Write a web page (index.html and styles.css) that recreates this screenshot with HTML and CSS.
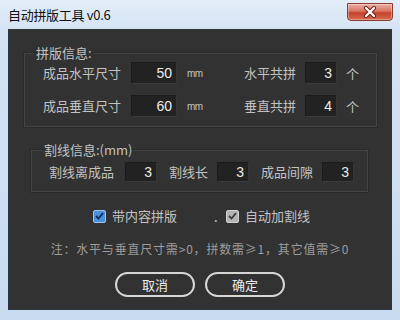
FILE: index.html
```html
<!DOCTYPE html>
<html lang="zh-CN">

<head>
    <meta charset="UTF-8">
    <title>自动拼版工具 v0.6</title>
    <link rel="stylesheet" href="styles.css">
</head>

<body>
    <div class="window">
        <div class="titlebar">
            <span class="title">自动拼版工具 v0.6</span>
            <button class="close" type="button" aria-label="关闭">
                <svg width="14" height="12" viewBox="0 0 14 12">
                    <path d="M3 2 L11 10 M11 2 L3 10" stroke="#6b1f14" stroke-width="4" stroke-linecap="round" fill="none" />
                    <path d="M3 2 L11 10 M11 2 L3 10" stroke="#ffffff" stroke-width="2.2" stroke-linecap="round" fill="none" />
                </svg>
            </button>
        </div>

        <div class="panel">
            <fieldset class="group group-size">
                <legend>拼版信息:</legend>
                <div class="row">
                    <label class="lbl lbl-size">成品水平尺寸</label>
                    <input class="field field-size" type="text" value="50">
                    <span class="unit unit-mm">mm</span>
                    <label class="lbl lbl-count">水平共拼</label>
                    <input class="field field-count" type="text" value="3">
                    <span class="unit unit-ge">个</span>
                </div>
                <div class="row">
                    <label class="lbl lbl-size">成品垂直尺寸</label>
                    <input class="field field-size" type="text" value="60">
                    <span class="unit unit-mm">mm</span>
                    <label class="lbl lbl-count">垂直共拼</label>
                    <input class="field field-count" type="text" value="4">
                    <span class="unit unit-ge">个</span>
                </div>
            </fieldset>

            <fieldset class="group group-cut">
                <legend>割线信息:(mm)</legend>
                <div class="row row-cut">
                    <label class="lbl lbl-gap">割线离成品</label>
                    <input class="field field-cut" type="text" value="3">
                    <label class="lbl lbl-len">割线长</label>
                    <input class="field field-cut" type="text" value="3">
                    <label class="lbl lbl-space">成品间隙</label>
                    <input class="field field-cut" type="text" value="3">
                </div>
            </fieldset>

            <div class="checks">
                <label class="check">
                    <span class="box box-on">
                        <svg width="9" height="8" viewBox="0 0 9 8">
                            <path d="M1 4 L3.5 6.5 L8 1.2" stroke="#10305c" stroke-width="1.8" fill="none" />
                        </svg>
                    </span>
                    带内容拼版
                </label>
                <span class="dot">.</span>
                <label class="check">
                    <span class="box box-gray">
                        <svg width="9" height="8" viewBox="0 0 9 8">
                            <path d="M1 4 L3.5 6.5 L8 1.2" stroke="#3a3a3a" stroke-width="1.8" fill="none" />
                        </svg>
                    </span>
                    自动加割线
                </label>
            </div>

            <p class="note">注：水平与垂直尺寸需&gt;0，拼数需≥1，其它值需≥0</p>

            <div class="actions">
                <button class="btn" type="button">取消</button>
                <button class="btn" type="button">确定</button>
            </div>
        </div>
    </div>
</body>

</html>
```

FILE: styles.css
```css
:root {
    --frame: #c9dcf0;
    --panel: #323232;
    --field: #222222;
    --text: #c2c2c2;
    --text-dim: #9c9c9c;
    --group-line: #444444;
}

body {
    margin: 0;
    font-family: "Noto Sans CJK SC", "Noto Sans", sans-serif;
}

.window {
    width: 400px;
    height: 320px;
    background: linear-gradient(180deg, #e4edf8 0%, #d3e3f4 10%, #c8dbef 100%);
    overflow: hidden;
}

.titlebar {
    height: 29px;
    display: flex;
    justify-content: space-between;
    align-items: flex-start;
    padding: 0 7px 0 8px;
    box-sizing: border-box;
}

.title {
    margin-top: 6px;
    font-size: 13px;
    line-height: 18px;
    letter-spacing: -0.3px;
    color: #111;
}

.close {
    margin-top: 3px;
    width: 46px;
    height: 18px;
    padding: 0;
    display: flex;
    align-items: center;
    justify-content: center;
    border: 1px solid #8a3a30;
    border-radius: 0 0 4px 4px;
    background: linear-gradient(180deg, #eab1a4 0%, #d9735f 45%, #c4412b 55%, #d66a50 100%);
    box-shadow: inset 0 0 0 1px rgba(255, 255, 255, 0.35);
}

.panel {
    margin: 0 8px;
    height: 281px;
    box-sizing: border-box;
    padding-top: 16px;
    background: var(--panel);
    border: 1px solid #2a3442;
    border-top: none;
    color: var(--text);
    font-size: 13px;
}

.group {
    margin: 0;
    border: 1px solid var(--group-line);
    box-shadow: 0 0 0 1px #2a2a2a;
}

.group legend {
    padding: 0 2px;
    font-size: 13px;
    line-height: 16px;
    color: var(--text);
}

.group-size {
    margin: 0 14px 0 15px;
    padding: 1px 0 9px 9px;
}

.group-size .row + .row {
    margin-top: 11px;
}

.group-cut {
    margin: 15px 23px 0 22px;
    padding: 4px 0 9px 10px;
}

.row {
    display: flex;
    align-items: center;
    padding-left: 9px;
}

.row-cut {
    padding-left: 7px;
}

.lbl {
    line-height: 16px;
    white-space: nowrap;
}

.lbl-size {
    width: 88px;
}

.lbl-count {
    width: 61px;
}

.lbl-gap {
    width: 76px;
}

.lbl-len {
    width: 48px;
    padding-left: 12px;
}

.lbl-space {
    width: 61px;
    padding-left: 12px;
}

.field {
    height: 22px;
    box-sizing: border-box;
    padding: 0 4px 0 0;
    background: var(--field);
    border: 1px solid #1b1b1b;
    border-bottom-color: #3b3b3b;
    border-right-color: #363636;
    color: #ececec;
    font-family: "Liberation Sans", sans-serif;
    font-size: 14px;
    text-align: right;
    outline: none;
}

.field-size {
    width: 46px;
}

.field-count,
.field-cut {
    width: 32px;
}

.field-cut {
    height: 20px;
}

.unit-mm {
    width: 57px;
    padding-left: 10px;
    font-family: "Liberation Sans", sans-serif;
    font-size: 10px;
    letter-spacing: -0.5px;
}

.unit-ge {
    padding-left: 9px;
}

.checks {
    margin-top: 16px;
    padding-left: 84px;
    display: flex;
    align-items: center;
    height: 16px;
}

.check {
    display: flex;
    align-items: center;
    gap: 6px;
    line-height: 16px;
}

.box {
    width: 13px;
    height: 13px;
    box-sizing: border-box;
    display: flex;
    align-items: center;
    justify-content: center;
    border-radius: 2px;
}

.box-on {
    background: #4c8fde;
    border: 1px solid #9cc2ee;
}

.box-gray {
    background: #b4b4b4;
    border: 1px solid #d0d0d0;
}

.dot {
    width: 49px;
    padding-left: 37px;
    box-sizing: border-box;
    color: #e0e0e0;
}

.note {
    margin: 17px 0 0;
    line-height: 16px;
    font-size: 12px;
    letter-spacing: 0.8px;
    color: var(--text-dim);
    text-align: center;
}

.actions {
    margin-top: 15px;
    display: flex;
    justify-content: center;
    gap: 10px;
}

.btn {
    width: 80px;
    height: 25px;
    padding: 0;
    border: 2px solid #d6d6d6;
    border-radius: 13px;
    background: var(--panel);
    color: #ececec;
    font-family: "Noto Sans CJK SC", sans-serif;
    font-size: 13px;
}
```
